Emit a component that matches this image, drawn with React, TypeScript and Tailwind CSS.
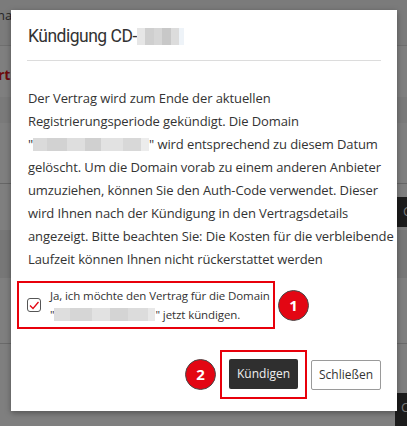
import React from 'react';

const font = { fontFamily: '"Open Sans", "Noto Sans", sans-serif' };
const titleFont = { fontFamily: 'Roboto, "Noto Sans", sans-serif' };

const Blur = ({ cells, h }: { cells: string[]; h: string }) => (
    <span className={`inline-flex align-middle ${h}`}>
        {cells.map((c, i) => (
            <span key={i} className={`${c} h-full`} />
        ))}
    </span>
);

const Badge = ({ n }: { n: string }) => (
    <div className="w-[31px] h-[31px] rounded-full bg-[#e30613] border-[1.5px] border-[#4a4a4a] flex items-center justify-center text-white font-bold text-[15px] shrink-0">
        {n}
    </div>
);

export default function App() {
    return (
        <div className="relative w-[407px] h-[426px] overflow-hidden bg-[#7f7f7f]" style={font}>
            {/* page behind the overlay */}
            <div className="absolute left-0 top-0 w-full h-[46px] bg-[#7b7b7b] border-b border-[#6f6f6f]" />
            <span className="absolute left-[-3px] top-[6px] text-[13px] text-[#262626]">na</span>
            <span className="absolute left-[-2px] top-[64px] text-[14px] font-bold text-[#6e0a0a]">rt</span>
            <div className="absolute left-0 top-[97px] w-full h-[26px] bg-[#7a7a7a]" />
            <div className="absolute left-0 top-[183px] w-full h-px bg-[#666]" />
            <div className="absolute left-0 top-[230px] w-full h-[48px] bg-[#777]" />
            <div className="absolute left-0 top-[343px] w-full h-px bg-[#6a6a6a]" />
            <div className="absolute left-[397px] top-[197px] w-[12px] h-[30px] bg-[#1c1c1c] text-[#7a7a7a] text-[13px] pl-[6px] pt-[5px]">C</div>
            <div className="absolute left-[395px] top-[393px] w-[14px] h-[34px] bg-[#1c1c1c] text-[#7a7a7a] text-[13px] pl-[6px] pt-[5px]">C</div>

            {/* modal */}
            <div className="relative ml-[11px] mt-[10px] w-[386px] h-[401px] bg-white shadow-[0_2px_6px_rgba(0,0,0,0.35)] px-4 text-[#333]">
                <div className="pt-[14px] pb-[12px] border-b border-[#dcdcdc] flex items-center">
                    <h2 className="text-[17.5px] leading-[24px] pl-[1px] tracking-[-0.5px]" style={titleFont}>Kündigung CD-</h2>
                    <Blur h="h-[17px]" cells={['w-[8px] bg-[#e6e6e6]', 'w-[9px] bg-[#cfcfcf]', 'w-[8px] bg-[#d6d6d6]', 'w-[9px] bg-[#c8c8c8]', 'w-[8px] bg-[#dcdcdc]', 'w-[5px] bg-[#eef3f8]']} />
                </div>

                <div className="pt-[26px] text-[13px] leading-[23px] pl-[1px] whitespace-nowrap tracking-[-0.1px]">
                    <div>Der Vertrag wird zum Ende der aktuellen</div>
                    <div>Registrierungsperiode gekündigt. Die Domain</div>
                    <div className="flex items-center">
                        <span>"</span>
                        <Blur h="h-[13px]" cells={['w-[14px] bg-[#dadada]', 'w-[20px] bg-[#d2d2d2]', 'w-[18px] bg-[#dedede]', 'w-[16px] bg-[#d0d0d0]', 'w-[22px] bg-[#e2e2e2]', 'w-[18px] bg-[#d8d8d8]', 'w-[8px] bg-[#ececec]']} />
                        <span>"&nbsp;wird entsprechend zu diesem Datum</span>
                    </div>
                    <div>gelöscht. Um die Domain vorab zu einem anderen Anbieter</div>
                    <div>umzuziehen, können Sie den Auth-Code verwendet. Dieser</div>
                    <div>wird Ihnen nach der Kündigung in den Vertragsdetails</div>
                    <div>angezeigt. Bitte beachten Sie: Die Kosten für die verbleibende</div>
                    <div>Laufzeit können Ihnen nicht rückerstattet werden</div>
                </div>

                <div className="mt-[10px] -ml-[10px] flex items-center gap-[3px]">
                    <div className="w-[258px] h-[48px] border-2 border-[#e8000b] flex items-center pl-[8px] gap-[9px]">
                        <div className="w-[14px] h-[14px] rounded-[3px] border-[1.5px] border-[#555] flex items-center justify-center shrink-0">
                            <svg width="10" height="9" viewBox="0 0 10 9">
                                <polyline points="1,4.5 4,7.5 9.5,1" fill="none" stroke="#e30613" strokeWidth="1.3" />
                            </svg>
                        </div>
                        <div className="text-[11.5px] leading-[19px] whitespace-nowrap tracking-[-0.1px]">
                            <div>Ja, ich möchte den Vertrag für die Domain</div>
                            <div className="flex items-center">
                                <span>"</span>
                                <Blur h="h-[13px]" cells={['w-[16px] bg-[#dedede]', 'w-[22px] bg-[#d6d6d6]', 'w-[18px] bg-[#e2e2e2]', 'w-[18px] bg-[#d4d4d4]', 'w-[20px] bg-[#dcdcdc]', 'w-[7px] bg-[#e8e8e8]']} />
                                <span>"&nbsp;jetzt kündigen.</span>
                            </div>
                        </div>
                    </div>
                    <Badge n="1" />
                </div>

                <div className="mt-[21px] flex items-center justify-end">
                    <Badge n="2" />
                    <div className="ml-[4px] border-2 border-[#e8000b] px-[7px] pt-[7px] pb-[8px]">
                        <button className="w-[69px] h-[30px] bg-[#2f2f2f] text-[#f0f0f0] text-[12px] rounded-[2px]">Kündigen</button>
                    </div>
                    <button className="ml-[4px] w-[70px] h-[30px] bg-white border border-[#9a9a9a] text-[#333] text-[12px] rounded-[2px]">Schließen</button>
                </div>
            </div>
        </div>
    );
}
